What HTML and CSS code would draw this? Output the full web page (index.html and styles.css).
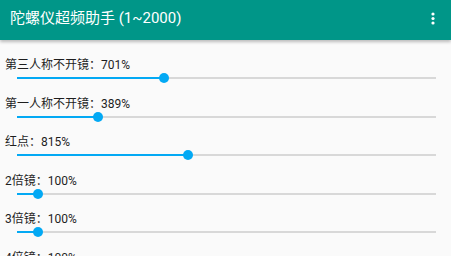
FILE: index.html
```html
<!DOCTYPE html>
<html lang="zh-CN">
<head>
    <meta charset="UTF-8">
    <meta name="viewport" content="width=device-width, initial-scale=1.0">
    <title>陀螺仪超频助手</title>
    <link rel="stylesheet" href="styles.css">
</head>
<body>
    <div class="app-bar">
        <div class="title">陀螺仪超频助手 (1~2000)</div>
        <svg class="menu" width="6" height="16" viewBox="0 0 6 16">
            <circle cx="3" cy="3" r="1.6" fill="#fff"/>
            <circle cx="3" cy="7.5" r="1.6" fill="#fff"/>
            <circle cx="3" cy="12" r="1.6" fill="#fff"/>
        </svg>
    </div>

    <div class="list">
        <div class="row">
            <div class="label">第三人称不开镜：701%</div>
            <div class="slider">
                <div class="track"></div>
                <div class="fill" style="width: 35.05%;"></div>
                <div class="thumb" style="left: 35.05%;"></div>
            </div>
        </div>
        <div class="row">
            <div class="label">第一人称不开镜：389%</div>
            <div class="slider">
                <div class="track"></div>
                <div class="fill" style="width: 19.45%;"></div>
                <div class="thumb" style="left: 19.45%;"></div>
            </div>
        </div>
        <div class="row">
            <div class="label">红点：815%</div>
            <div class="slider">
                <div class="track"></div>
                <div class="fill" style="width: 40.75%;"></div>
                <div class="thumb" style="left: 40.75%;"></div>
            </div>
        </div>
        <div class="row">
            <div class="label">2倍镜：100%</div>
            <div class="slider">
                <div class="track"></div>
                <div class="fill" style="width: 5%;"></div>
                <div class="thumb" style="left: 5%;"></div>
            </div>
        </div>
        <div class="row">
            <div class="label">3倍镜：100%</div>
            <div class="slider">
                <div class="track"></div>
                <div class="fill" style="width: 5%;"></div>
                <div class="thumb" style="left: 5%;"></div>
            </div>
        </div>
        <div class="row">
            <div class="label">4倍镜：100%</div>
            <div class="slider">
                <div class="track"></div>
                <div class="fill" style="width: 5%;"></div>
                <div class="thumb" style="left: 5%;"></div>
            </div>
        </div>
    </div>
</body>
</html>
```

FILE: styles.css
```css
body {
    margin: 0;
    padding: 0;
    background-color: #fafafa;
    font-family: Roboto, "Noto Sans CJK SC", sans-serif;
    overflow: hidden;
}
.app-bar {
    height: 40px;
    background-color: #009688;
    display: flex;
    align-items: center;
    justify-content: space-between;
    padding: 0 15px 0 10px;
    box-shadow: 0 2px 3px rgba(0, 0, 0, 0.25);
    position: relative;
    z-index: 1;
}
.title {
    color: #ffffff;
    font-size: 15px;
    line-height: 20px;
    margin-top: -4px;
}
.menu {
    margin-top: -3px;
}
.list {
    padding-top: 17px;
}
.row {
    height: 38.5px;
    padding-left: 5px;
}
.label {
    font-size: 12px;
    line-height: 16px;
    color: #1e1e1e;
}
.slider {
    position: relative;
    height: 10px;
    margin: 0 15px 0 12px;
}
.track {
    position: absolute;
    left: 0;
    right: 0;
    top: 4px;
    height: 2px;
    background-color: #d8d8d8;
}
.fill {
    position: absolute;
    left: 0;
    top: 4px;
    height: 2px;
    background-color: #03a9f4;
}
.thumb {
    position: absolute;
    top: 0;
    width: 10px;
    height: 10px;
    margin-left: -5px;
    border-radius: 50%;
    background-color: #03a9f4;
}
```
